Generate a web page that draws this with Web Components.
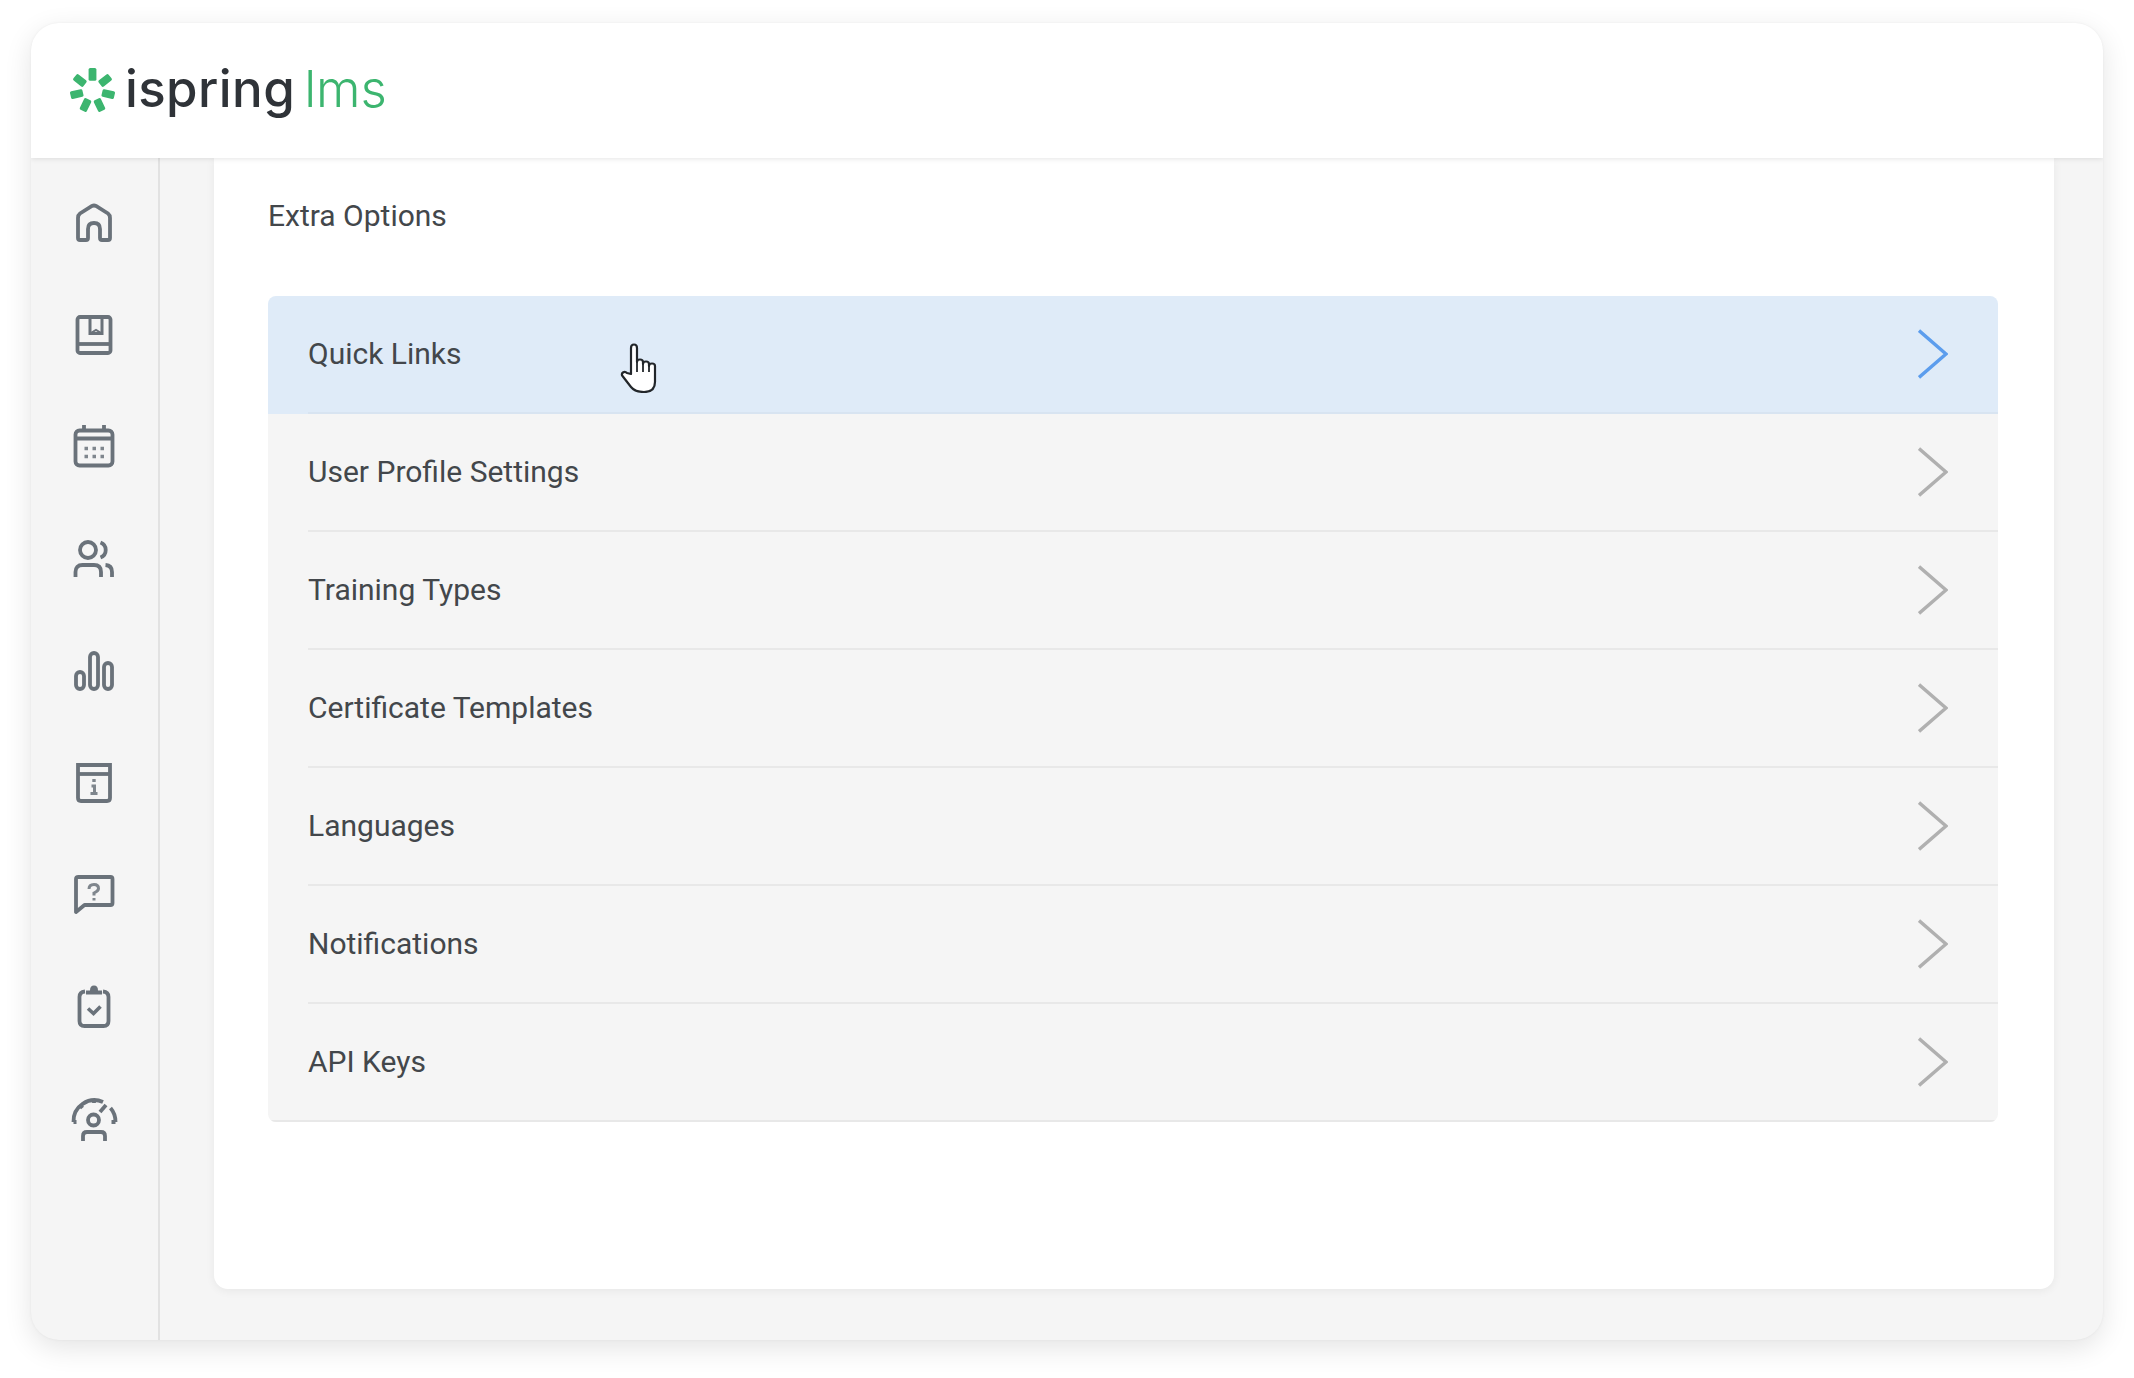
<!DOCTYPE html>
<html lang="en">
<head>
<meta charset="utf-8">
<title>iSpring LMS</title>
<style>
  html, body { margin: 0; height: 100%; background: #fff; }
  body { font-family: Roboto, "Liberation Sans", sans-serif; }
</style>
</head>
<body>
<lms-window>
  <lms-header slot="header"></lms-header>
  <side-nav slot="nav">
    <nav-icon name="home"></nav-icon>
    <nav-icon name="book"></nav-icon>
    <nav-icon name="calendar"></nav-icon>
    <nav-icon name="users"></nav-icon>
    <nav-icon name="bars"></nav-icon>
    <nav-icon name="info"></nav-icon>
    <nav-icon name="help"></nav-icon>
    <nav-icon name="clipboard"></nav-icon>
    <nav-icon name="gauge"></nav-icon>
  </side-nav>
  <options-card>
    <span slot="title">Extra Options</span>
    <option-row active>Quick Links<hand-cursor slot="overlay"></hand-cursor></option-row>
    <option-row>User Profile Settings</option-row>
    <option-row>Training Types</option-row>
    <option-row>Certificate Templates</option-row>
    <option-row>Languages</option-row>
    <option-row>Notifications</option-row>
    <option-row last>API Keys</option-row>
  </options-card>
</lms-window>

<script>
// App window
class LmsWindow extends HTMLElement {
  constructor() {
    super();
    const shadow = this.attachShadow({mode: 'open'});
    shadow.innerHTML = `
      <style>
        :host { display: block; padding: 23px 31px 0; }
        .window { display: flex; flex-direction: column; height: 1317px; background: #f5f5f5; border-radius: 28px; box-shadow: 0 8px 28px rgba(0,0,0,.11), 0 0 3px rgba(0,0,0,.05); overflow: hidden; }
        .body { flex: 1; display: flex; min-height: 0; }
        .main { flex: 1; min-width: 0; padding: 0 49px 51px 54px; }
      </style>
      <div class="window">
        <slot name="header"></slot>
        <div class="body">
          <slot name="nav"></slot>
          <div class="main"><slot></slot></div>
        </div>
      </div>
    `;
  }
}
customElements.define('lms-window', LmsWindow);

// Top bar with logo
class LmsHeader extends HTMLElement {
  constructor() {
    super();
    const shadow = this.attachShadow({mode: 'open'});
    const petals = [0, 1, 2, 3, 4, 5, 6].map(i =>
      `<rect x="-4" y="-23" width="8" height="13" rx="1.6" transform="rotate(${i * 360 / 7})"/>`).join('');
    shadow.innerHTML = `
      <style>
        :host { display: block; position: relative; z-index: 2; height: 135px; background: #fff; box-shadow: 0 1px 5px rgba(0,0,0,.1); }
        .logo { display: flex; align-items: center; height: 100%; padding-left: 39px; font-family: Inter, sans-serif; font-size: 51px; line-height: 1; }
        svg { width: 45px; height: 45px; margin-right: 10px; fill: #3cb56f; flex: none; }
        .text { display: flex; margin-bottom: 4px; }
        .brand { color: #2f3338; font-weight: 500; letter-spacing: .4px; }
        .product { color: #3cb56f; font-weight: 300; margin-left: 9px; }
      </style>
      <div class="logo">
        <svg viewBox="-23 -23 46 46">${petals}</svg>
        <div class="text"><span class="brand">ispring</span><span class="product">lms</span></div>
      </div>
    `;
  }
}
customElements.define('lms-header', LmsHeader);

// Left icon rail
class SideNav extends HTMLElement {
  constructor() {
    super();
    const shadow = this.attachShadow({mode: 'open'});
    shadow.innerHTML = `
      <style>
        :host { display: block; flex: none; width: 127px; border-right: 2px solid #e2e2e2; padding-top: 9px; box-sizing: content-box; }
        .list { display: flex; flex-direction: column; }
      </style>
      <div class="list"><slot></slot></div>
    `;
  }
}
customElements.define('side-nav', SideNav);

const NAV_ICONS = {
  home: `<path d="M8 19Q8 16 10 14.5L22 7Q24 6 26 7L38 14.5Q40 16 40 19V39Q40 41 38 41H32Q30 41 30 39V30Q30 24 24 24Q18 24 18 30V39Q18 41 16 41H10Q8 41 8 39Z"/>`,
  book: `<rect x="7.5" y="6" width="33" height="36" rx="2.5"/><path d="M8 33H40"/><path d="M20 6V22.5H32V6" stroke-width="3"/><path d="M20 22.5L26 19L32 22.5" stroke-width="2"/>`,
  calendar: `<rect x="5.5" y="7.5" width="37" height="35" rx="4"/><path d="M5.5 15.5H42.5"/><path d="M14 2V8M34 2V8"/><path class="dots" d="M14.5 25.5H18M22.5 25.5H26M30.5 25.5H34M14.5 33.5H18M22.5 33.5H26M30.5 33.5H34" stroke-width="3.4"/>`,
  users: `<circle cx="18" cy="15" r="8"/><path d="M30.5 7.5A8 8 0 0 1 30.5 22.5"/><path d="M5.5 42V37Q5.5 30 12.5 30H24Q31 30 31 37V42"/><path d="M35.5 30Q42 30.5 42 37V42"/>`,
  bars: `<rect x="6" y="25" width="8" height="17" rx="4"/><rect x="20" y="6" width="8" height="36" rx="4"/><rect x="34" y="16" width="8" height="26" rx="4"/>`,
  info: `<path d="M8 6H40V39Q40 42 37 42H11Q8 42 8 39Z"/><path d="M8 15H40"/><path class="dots" d="M24 20V23" stroke-width="3.4"/><path class="dots" d="M21.5 27H24.5V34.5M20.5 34.5H27.5" stroke-width="3"/>`,
  help: `<path d="M6 8Q6 6 8.5 6H40.5Q42.5 6 42.5 8V32Q42.5 34 40.5 34H14.5L6 41Z" stroke-linejoin="round"/><path class="dots" d="M19 18Q19 13.5 24 13.5Q28.5 13.5 28.5 17.5Q28.5 20 24 22V24.5" stroke-width="3"/><path class="dots" d="M24 27V29.5" stroke-width="3"/>`,
  clipboard: `<path d="M15 8.5Q9.5 9 9.5 14V38Q9.5 43 14.5 43H33.5Q38.5 43 38.5 38V14Q38.5 9 33 8.5"/><path class="solid" d="M16 11.5V7.5H20Q20 2.5 24 2.5Q28 2.5 28 7.5H32V11.5Z"/><path d="M18 25.5L23.5 30.5L30.5 23.5" stroke-width="3.6"/>`,
  gauge: `<path d="M3.5 27A21 21 0 0 1 33 7M40.5 13A21 21 0 0 1 45.5 27"/><path d="M3.5 27H6.5M41.5 27H45.5M24 4V8M10 10L12.5 13"/><path d="M30 17L36 10"/><circle cx="23.5" cy="25" r="5.5"/><path d="M13 46V41Q13 37 17 37H31Q35 37 35 41V46"/>`
};

// One rail entry
class NavIcon extends HTMLElement {
  constructor() {
    super();
    const shadow = this.attachShadow({mode: 'open'});
    shadow.innerHTML = `
      <style>
        :host { display: flex; align-items: center; justify-content: center; height: 112px; padding-right: 2px; }
        svg { width: 48px; height: 48px; fill: none; stroke: #6a727a; stroke-width: 3.8; stroke-linecap: butt; }
        .dots { stroke: #7f868d; }
        .solid { fill: #6a727a; stroke: none; }
      </style>
      <svg viewBox="0 0 48 48">${NAV_ICONS[this.getAttribute('name')] || ''}</svg>
    `;
  }
}
customElements.define('nav-icon', NavIcon);

// White panel holding the list
class OptionsCard extends HTMLElement {
  constructor() {
    super();
    const shadow = this.attachShadow({mode: 'open'});
    shadow.innerHTML = `
      <style>
        :host { display: block; height: 100%; box-sizing: border-box; padding: 0 56px 0 54px; background: #fff; border-radius: 0 0 14px 14px; box-shadow: 0 2px 10px rgba(0,0,0,.06); }
        .title { padding: 39px 0 43px; height: 56px; font-size: 30px; line-height: 37px; color: #43474b; }
        .list { display: flex; flex-direction: column; border-radius: 8px; overflow: hidden; }
      </style>
      <div class="title"><slot name="title"></slot></div>
      <div class="list"><slot></slot></div>
    `;
  }
}
customElements.define('options-card', OptionsCard);

// Row with a chevron
class OptionRow extends HTMLElement {
  constructor() {
    super();
    const shadow = this.attachShadow({mode: 'open'});
    shadow.innerHTML = `
      <style>
        :host { display: block; position: relative; height: 118px; background: #f5f5f5; }
        :host([active]) { background: #dfebf8; }
        .row { display: flex; align-items: center; justify-content: space-between; height: 100%; box-sizing: border-box; margin-left: 40px; padding-right: 50px; border-bottom: 2px solid #e8e8e8; font-size: 30px; color: #43474b; }
        :host([active]) .row { border-bottom-color: #d8e4f1; }
        :host([last]) .row { margin-left: 0; padding-left: 40px; }
        span { margin-bottom: 2px; }
        svg { width: 30px; height: 50px; fill: none; stroke: #b0b0b0; stroke-width: 3.4; }
        :host([active]) svg { stroke: #5c9ded; }
      </style>
      <div class="row">
        <span><slot></slot></span>
        <svg viewBox="0 0 30 50"><path d="M1 1.5L28 25L1 48.5"/></svg>
      </div>
      <slot name="overlay"></slot>
    `;
  }
}
customElements.define('option-row', OptionRow);

// Mouse pointer over the hovered row
class HandCursor extends HTMLElement {
  constructor() {
    super();
    const shadow = this.attachShadow({mode: 'open'});
    shadow.innerHTML = `
      <style>
        :host { position: absolute; left: 352px; top: 47px; width: 38px; height: 50px; }
        svg { display: block; width: 38px; height: 50px; fill: #fff; stroke: #22262a; stroke-width: 2.2; stroke-linejoin: round; }
      </style>
      <svg viewBox="0 0 38 50">
        <path d="M11 31V5Q11 1.5 14 1.5Q17 1.5 17 5V19Q17 16.5 20 16.5Q23 16.5 23 19V21Q23 18.5 26 18.5Q29 18.5 29 21V23Q29 20.5 32 20.5Q35 20.5 35 23V39Q35 49 24 49Q15 49 11 44L2.5 33Q1 31 3 29.5Q5 28 7 30Z"/>
        <path d="M17 19V29M23 21V29M29 23V29" fill="none" stroke-width="1.8"/>
      </svg>
    `;
  }
}
customElements.define('hand-cursor', HandCursor);
</script>
</body>
</html>
